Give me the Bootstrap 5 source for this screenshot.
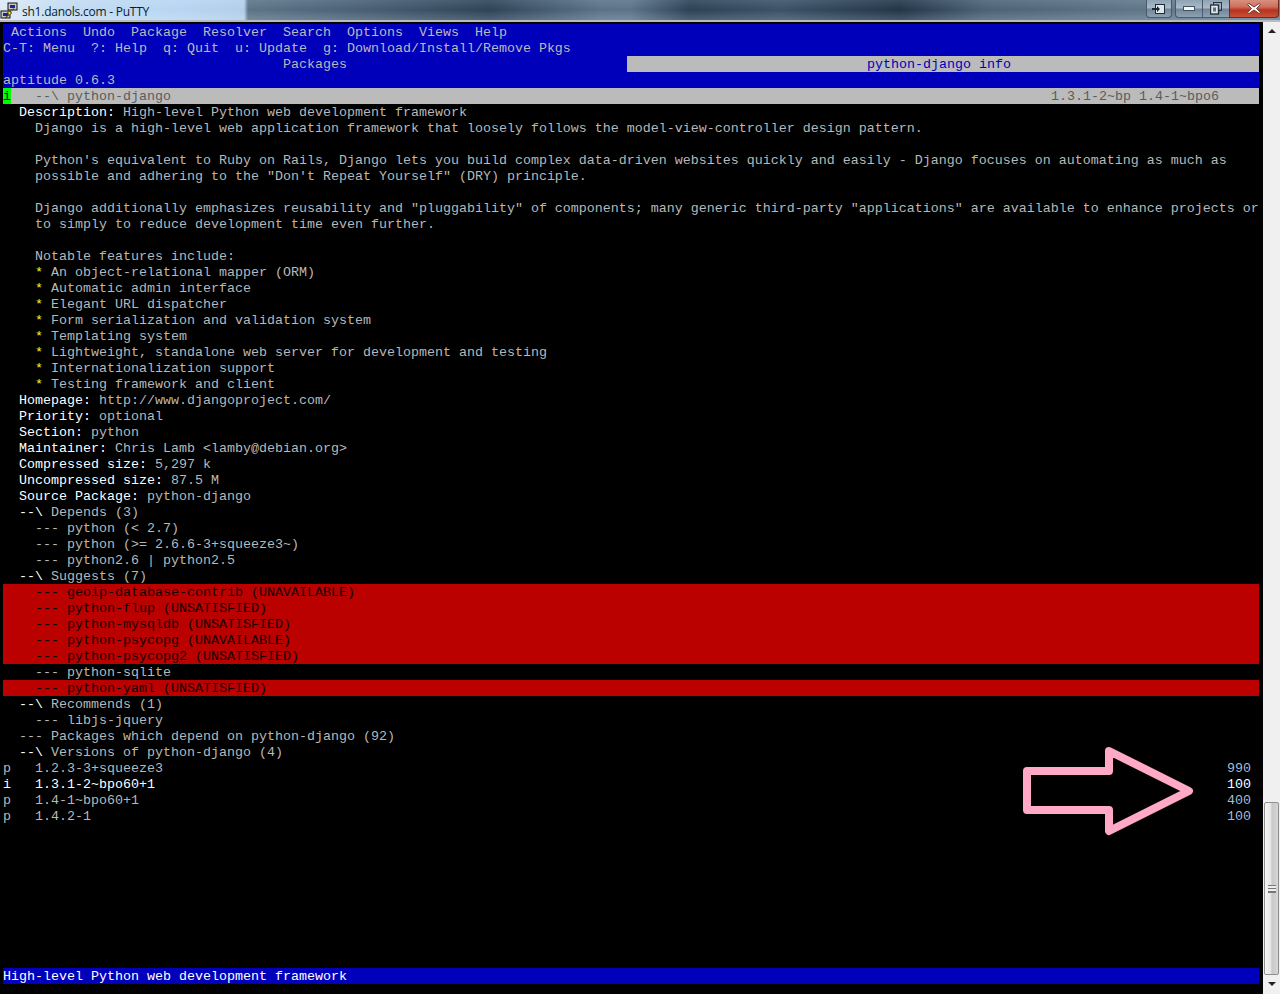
<!DOCTYPE html>
<html lang="en">
<head>
<meta charset="utf-8">
<title>sh1.danols.com - PuTTY</title>
<link href="https://cdn.jsdelivr.net/npm/bootstrap@5.3.0/dist/css/bootstrap.min.css" rel="stylesheet">
<style>
html,body{height:994px;overflow:hidden;background:#000;margin:0}
.win-title{height:22px;background:
 linear-gradient(180deg,rgba(255,255,255,.10) 0,rgba(255,255,255,0) 50%,rgba(255,255,255,.16) 100%),
 linear-gradient(90deg,#dfeaf6 0,#c4dcf3 60px,#b7d5f2 180px,#b2cfea 244px,#5d7488 248px,#4d6479 340px,#2f4459 490px,#5b7389 600px,#5c748a 630px,#2d4257 690px,#3c5268 780px,#223649 900px,#4c6277 985px,#5f7689 1140px,#6a8093 1280px);
 border-bottom:2px solid #b4bcc4;box-sizing:border-box;position:relative}
.win-name{font:12px/20px "Open Sans","Noto Sans",sans-serif;color:#0c1a2c;letter-spacing:-.02em;margin-left:3px;padding-top:2px}
.win-btns{margin-right:1px;height:18px}
.wb{height:18px;border:1px solid #47596a;border-top:0;border-radius:0 0 4px 4px;background:linear-gradient(180deg,#8fa3b4 0,#a9b8c6 45%,#71879a 55%,#8ea1b1 100%)}
.wb-pin{width:26px;margin-right:3px}
.wb-min,.wb-max{width:27px}
.wb-min{border-radius:0 0 0 4px;border-right:0}
.wb-max{border-radius:0;border-right:0}
.wb-close{width:50px;border-color:#6d2b20;border-radius:0 0 4px 0;background:linear-gradient(180deg,#d8907f 0,#cf6f5b 40%,#b8321d 60%,#c8503a 100%)}
.term-wrap{height:972px}
.term{width:1259px;padding:2px 0 0 3px;position:relative;flex:none}
.gutter{width:4px;flex:none}
.tt{font-family:"Liberation Mono","Courier New",monospace;font-size:13.333px;line-height:18px;color:#b8b8b8;background:#000;width:1256px}
.ln{height:16px;white-space:pre;overflow:hidden}
.b-blue{background:#0000bb}
.b-grey{background:#bbb;color:#5c5c5c}
.b-red{background:#bb0000;color:#100000}
.t-white{color:#fff}
.t-dim{color:#bbb}
.t-yel{color:#ff0}
.t-blue{color:#0000bb}
.t-num{color:#a8bcd0}
.cur{background:#0f0;color:#000;display:inline-block;height:16px;vertical-align:top}
.half{width:624px;flex:none}
.fillgrow{flex:1 1 auto}
.pad-r5{padding-right:40px}
.pad-r1{padding-right:8px}
.tab-on{padding-left:240px}
.arrow{position:absolute;left:0;top:-22px;width:1280px;height:994px;pointer-events:none}
.sbar{width:17px;flex:none;background:#f0f0f0;position:relative}
.sb-btn{height:17px}
.sb-top{height:763px;flex:none}
.sb-thumb{height:173px;margin:0 1px;border:1px solid #8f8f8f;border-radius:2px;background:linear-gradient(90deg,#f4f4f4 0,#e9e9e9 40%,#c9c9c9 55%,#d6d6d6 100%)}
.sb-grip{width:8px;height:8px;border-top:1px solid #777;border-bottom:1px solid #777;background:linear-gradient(180deg,#eee 0,#eee 2px,#777 2px,#777 3px,#eee 3px,#eee 5px,#777 5px,#777 6px,#eee 6px)}
.tri-up{width:0;height:0;border:4px solid transparent;border-top:0;border-bottom:4px solid #222}
.tri-dn{width:0;height:0;border:4px solid transparent;border-bottom:0;border-top:4px solid #222}
</style>
</head>
<body>
<header class="win-title d-flex align-items-start justify-content-between">
  <div class="d-flex align-items-center">
    <svg width="19" height="19" viewBox="0 0 19 19" aria-hidden="true">
      <rect x="8" y="1" width="9" height="7" fill="#c9c9c9" stroke="#111"/>
      <rect x="10" y="3" width="5" height="3" fill="#1a2a88"/>
      <rect x="1" y="9" width="9" height="7" fill="#c9c9c9" stroke="#111"/>
      <rect x="3" y="11" width="5" height="3" fill="#1a2a88"/>
      <path d="M13 7 7 11 9 12 5 16 12 11 10 10 14 7Z" fill="#f5e11a" stroke="#2a2400" stroke-width=".6"/>
    </svg>
    <span class="win-name">sh1.danols.com - PuTTY</span>
  </div>
  <div class="win-btns d-flex">
    <div class="wb wb-pin d-flex align-items-center justify-content-center">
      <svg width="14" height="12" viewBox="0 0 14 12" aria-hidden="true"><rect x="3.5" y="1.5" width="9" height="9" fill="#dfe6ec" stroke="#1d2a36"/><path d="M0 5h5V3l3 3-3 3V7H0z" fill="#1d2a36"/></svg>
    </div>
    <div class="wb wb-min d-flex align-items-center justify-content-center">
      <svg width="12" height="6" viewBox="0 0 12 6" aria-hidden="true"><rect x=".5" y=".5" width="11" height="4" fill="#f4f6f8" stroke="#41525f"/></svg>
    </div>
    <div class="wb wb-max d-flex align-items-center justify-content-center">
      <svg width="12" height="13" viewBox="0 0 12 13" aria-hidden="true"><rect x="3.5" y=".5" width="8" height="8" fill="none" stroke="#26333e"/><rect x=".5" y="3" width="8" height="9" fill="#dfe6ec" stroke="#26333e" stroke-width="1.4"/><rect x="3" y="5.5" width="3" height="4" fill="#60727f"/></svg>
    </div>
    <div class="wb wb-close d-flex align-items-center justify-content-center">
      <svg width="16" height="13" viewBox="0 0 16 13" aria-hidden="true"><path d="M3 1.500 8 5l5-3.500 1.500 1L10.500 6.500l4 4L13 11.500 8 8l-5 3.500-1.500-1 4-4-4-4z" fill="#fff" stroke="#6b3a30" stroke-width="1"/></svg>
    </div>
  </div>
</header>
<main class="term-wrap d-flex">
  <div class="term">
    <div class="tt">
      <div class="ln b-blue t-dim"> Actions  Undo  Package  Resolver  Search  Options  Views  Help</div>
      <div class="ln b-blue t-dim">C-T: Menu  ?: Help  q: Quit  u: Update  g: Download/Install/Remove Pkgs</div>
      <div class="ln b-blue d-flex"><span class="half">                                   Packages</span><span class="b-grey t-blue fillgrow tab-on">python-django info</span></div>
      <div class="ln b-blue t-dim">aptitude 0.6.3</div>
      <div class="ln b-grey d-flex justify-content-between pad-r5"><span><span class="cur">i</span>   --\ python-django</span><span>1.3.1-2~bp 1.4-1~bpo6</span></div>
      <div class="ln">  <span class="t-white">Description:</span> High-level Python web development framework</div>
      <div class="ln">    Django is a high-level web application framework that loosely follows the model-view-controller design pattern.</div>
      <div class="ln"> </div>
      <div class="ln">    Python's equivalent to Ruby on Rails, Django lets you build complex data-driven websites quickly and easily - Django focuses on automating as much as</div>
      <div class="ln">    possible and adhering to the "Don't Repeat Yourself" (DRY) principle.</div>
      <div class="ln"> </div>
      <div class="ln">    Django additionally emphasizes reusability and "pluggability" of components; many generic third-party "applications" are available to enhance projects or</div>
      <div class="ln">    to simply to reduce development time even further.</div>
      <div class="ln"> </div>
      <div class="ln">    Notable features include:</div>
      <div class="ln">    <span class="t-yel">*</span> An object-relational mapper (ORM)</div>
      <div class="ln">    <span class="t-yel">*</span> Automatic admin interface</div>
      <div class="ln">    <span class="t-yel">*</span> Elegant URL dispatcher</div>
      <div class="ln">    <span class="t-yel">*</span> Form serialization and validation system</div>
      <div class="ln">    <span class="t-yel">*</span> Templating system</div>
      <div class="ln">    <span class="t-yel">*</span> Lightweight, standalone web server for development and testing</div>
      <div class="ln">    <span class="t-yel">*</span> Internationalization support</div>
      <div class="ln">    <span class="t-yel">*</span> Testing framework and client</div>
      <div class="ln">  <span class="t-white">Homepage:</span> http://www.djangoproject.com/</div>
      <div class="ln">  <span class="t-white">Priority:</span> optional</div>
      <div class="ln">  <span class="t-white">Section:</span> python</div>
      <div class="ln">  <span class="t-white">Maintainer:</span> Chris Lamb &lt;lamby@debian.org&gt;</div>
      <div class="ln">  <span class="t-white">Compressed size:</span> 5,297 k</div>
      <div class="ln">  <span class="t-white">Uncompressed size:</span> 87.5 M</div>
      <div class="ln">  <span class="t-white">Source Package:</span> python-django</div>
      <div class="ln">  <span class="t-white">--\</span> Depends (3)</div>
      <div class="ln">    --- python (&lt; 2.7)</div>
      <div class="ln">    --- python (&gt;= 2.6.6-3+squeeze3~)</div>
      <div class="ln">    --- python2.6 | python2.5</div>
      <div class="ln">  <span class="t-white">--\</span> Suggests (7)</div>
      <div class="ln b-red">    --- geoip-database-contrib (UNAVAILABLE)</div>
      <div class="ln b-red">    --- python-flup (UNSATISFIED)</div>
      <div class="ln b-red">    --- python-mysqldb (UNSATISFIED)</div>
      <div class="ln b-red">    --- python-psycopg (UNAVAILABLE)</div>
      <div class="ln b-red">    --- python-psycopg2 (UNSATISFIED)</div>
      <div class="ln">    --- python-sqlite</div>
      <div class="ln b-red">    --- python-yaml (UNSATISFIED)</div>
      <div class="ln">  <span class="t-white">--\</span> Recommends (1)</div>
      <div class="ln">    --- libjs-jquery</div>
      <div class="ln">  --- Packages which depend on python-django (92)</div>
      <div class="ln">  <span class="t-white">--\</span> Versions of python-django (4)</div>
      <div class="ln d-flex justify-content-between pad-r1"><span>p   1.2.3-3+squeeze3</span><span class="t-num">990</span></div>
      <div class="ln d-flex justify-content-between pad-r1 t-white"><span>i   1.3.1-2~bpo60+1</span><span>100</span></div>
      <div class="ln d-flex justify-content-between pad-r1"><span>p   1.4-1~bpo60+1</span><span class="t-num">400</span></div>
      <div class="ln d-flex justify-content-between pad-r1"><span>p   1.4.2-1</span><span class="t-num">100</span></div>
      <div class="ln"> </div><div class="ln"> </div><div class="ln"> </div><div class="ln"> </div>
      <div class="ln"> </div><div class="ln"> </div><div class="ln"> </div><div class="ln"> </div>
      <div class="ln"> </div>
      <div class="ln b-blue t-white">High-level Python web development framework</div>
    </div>
    <svg class="arrow" viewBox="0 0 1280 994" aria-hidden="true">
      <path d="M1027 771H1109V751L1189 791L1109 831V810H1027Z" fill="none" stroke="#ffa9c6" stroke-width="8" stroke-linejoin="round"/>
    </svg>
  </div>
  <div class="gutter"></div>
  <aside class="sbar d-flex flex-column align-items-center">
    <div class="sb-btn d-flex align-items-center justify-content-center w-100"><div class="tri-up"></div></div>
    <div class="sb-top"></div>
    <div class="sb-thumb d-flex align-items-center justify-content-center align-self-stretch"><div class="sb-grip"></div></div>
    <div class="sb-btn d-flex align-items-center justify-content-center w-100"><div class="tri-dn"></div></div>
  </aside>
</main>
</body>
</html>
